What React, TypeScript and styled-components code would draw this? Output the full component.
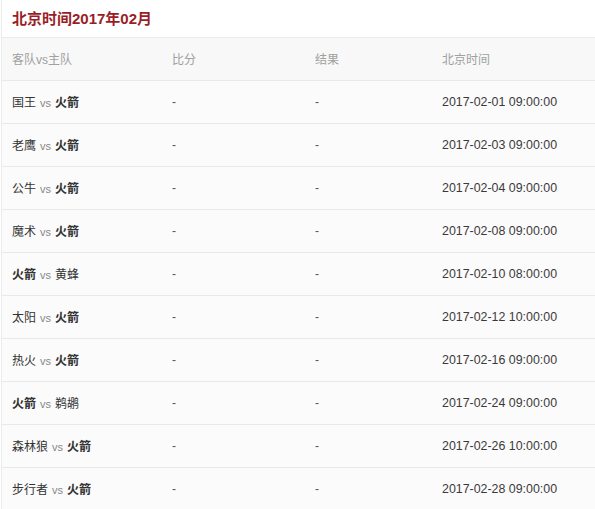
import * as React from "react";
import styled, { createGlobalStyle } from "styled-components";

const GlobalStyle = createGlobalStyle`
  html, body {
    margin: 0;
    padding: 0;
    background: #ffffff;
  }
  body {
    font-family: "Liberation Sans", Arial, "Noto Sans CJK SC", sans-serif;
  }
`;

type Game = {
  away: string;
  home: string;
  time: string;
};

const HOME_TEAM = "火箭";

const games: Game[] = [
  { away: "国王", home: "火箭", time: "2017-02-01 09:00:00" },
  { away: "老鹰", home: "火箭", time: "2017-02-03 09:00:00" },
  { away: "公牛", home: "火箭", time: "2017-02-04 09:00:00" },
  { away: "魔术", home: "火箭", time: "2017-02-08 09:00:00" },
  { away: "火箭", home: "黄蜂", time: "2017-02-10 08:00:00" },
  { away: "太阳", home: "火箭", time: "2017-02-12 10:00:00" },
  { away: "热火", home: "火箭", time: "2017-02-16 09:00:00" },
  { away: "火箭", home: "鹈鹕", time: "2017-02-24 09:00:00" },
  { away: "森林狼", home: "火箭", time: "2017-02-26 10:00:00" },
  { away: "步行者", home: "火箭", time: "2017-02-28 09:00:00" },
];

const Wrapper = styled.div`
  margin-left: 1px;
  border-left: 1px solid #ececec;
  width: 594px;
`;

const Title = styled.h3`
  margin: 0;
  height: 38px;
  padding: 7px 0 0 10px;
  box-sizing: border-box;
  font-size: 15px;
  font-weight: bold;
  color: #9a1d26;
  font-family: "Liberation Sans", Arial, "Noto Sans CJK SC", sans-serif;
  border-bottom: 1px solid #ebebeb;
`;

const Table = styled.table`
  width: 100%;
  border-collapse: collapse;
  table-layout: fixed;
  font-size: 12px;
`;

const HeadRow = styled.tr`
  background: #f8f8f8;
`;

const Row = styled.tr`
  background: #fbfbfb;
`;

const Th = styled.th<{ $w?: number }>`
  box-sizing: border-box;
  width: ${(p) => (p.$w ? `${p.$w}px` : "auto")};
  height: 42px;
  padding: 0 0 0 10px;
  text-align: left;
  font-weight: normal;
  color: #a0a0a0;
  border-bottom: 1px solid #e9e9e9;
  font-family: "Noto Sans CJK SC", sans-serif;
  font-size: 12px;
`;

const HeadVs = styled.span`
  font-family: "Liberation Sans", Arial, sans-serif;
`;

const Td = styled.td`
  height: 42px;
  padding: 0 0 0 10px;
  color: #333333;
  border-bottom: 1px solid #e9e9e9;
  white-space: nowrap;
`;

const Team = styled.span<{ $bold?: boolean }>`
  font-family: "Noto Sans CJK SC", sans-serif;
  font-weight: ${(p) => (p.$bold ? 700 : 400)};
  color: #333333;
  font-size: 12px;
`;

const Vs = styled.span`
  color: #888888;
  font-size: 11px;
  margin: 0 4px;
`;

const Dash = styled.span`
  color: #555555;
`;

const Time = styled.span`
  font-size: 12.4px;
  color: #3a3a3a;
`;

function GameRow({ game }: { game: Game }) {
  return (
    <Row>
      <Td>
        <Team $bold={game.away === HOME_TEAM}>{game.away}</Team>
        <Vs>vs</Vs>
        <Team $bold={game.home === HOME_TEAM}>{game.home}</Team>
      </Td>
      <Td>
        <Dash>-</Dash>
      </Td>
      <Td>
        <Dash>-</Dash>
      </Td>
      <Td>
        <Time>{game.time}</Time>
      </Td>
    </Row>
  );
}

export default function App() {
  return (
    <>
      <GlobalStyle />
      <Wrapper>
        <Title>北京时间2017年02月</Title>
        <Table>
          <thead>
            <HeadRow>
              <Th $w={160}>
                客队<HeadVs>vs</HeadVs>主队
              </Th>
              <Th $w={143}>比分</Th>
              <Th $w={127}>结果</Th>
              <Th>北京时间</Th>
            </HeadRow>
          </thead>
          <tbody>
            {games.map((g) => (
              <GameRow key={g.time} game={g} />
            ))}
          </tbody>
        </Table>
      </Wrapper>
    </>
  );
}
